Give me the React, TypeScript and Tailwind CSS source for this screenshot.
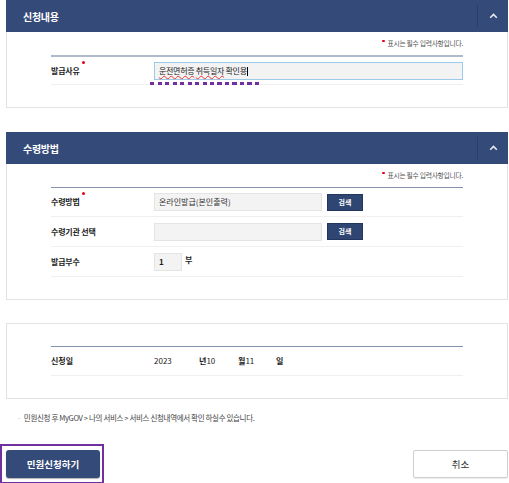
import React from "react";

const Dot = () => (
  <span className="absolute right-[-5px] top-[-4px] w-[3px] h-[3px] rounded-full bg-[#e60012]" />
);

const Header = ({ title }: { title: string }) => (
  <div className="flex h-[32px] bg-[#344a78] items-stretch">
    <div className="flex-1 flex items-center pl-[17px] text-white font-bold text-[10px] tracking-[-0.3px]">
      {title}
    </div>
    <div className="flex items-center">
      <div className="w-px h-[22px] bg-[#2b3e66]" />
      <div className="w-[30px] flex items-center justify-center">
        <svg width="9" height="6" viewBox="0 0 9 6">
          <polyline points="1.2,4.8 4.5,1.5 7.8,4.8" fill="none" stroke="#e6eaf2" strokeWidth="1.6" />
        </svg>
      </div>
    </div>
  </div>
);

const Note = () => (
  <div className="h-[10px] flex items-center justify-end pr-[44px] text-[6.8px] text-[#555] tracking-[-0.3px]">
    <span className="w-[2.5px] h-[2.5px] rounded-full bg-[#e60012] mr-[3px] -mt-[4px]" />
    표시는 필수 입력사항입니다.
  </div>
);

const SearchBtn = () => (
  <div className="w-[36px] h-[17px] bg-[#2f4572] border border-[#22365e] text-white text-[7px] font-bold flex items-center justify-center">
    검색
  </div>
);

export default function App() {
  return (
    <div className="w-[509px] h-[483px] bg-white relative overflow-hidden font-['Noto_Sans_CJK_KR','Noto_Sans',sans-serif] text-[#222]">
      {/* Section 1 */}
      <div className="ml-[6px] w-[502px]">
        <Header title="신청내용" />
        <div className="border border-t-0 border-[#e2e2e2] pt-[6px] pb-[22px]">
          <Note />
          <div className="ml-[44px] w-[412px] mt-[7px] border-t-2 border-[#b1bacb]">
            <div className="h-[28px] flex items-center border-b border-[#f0f0f0] relative">
              <div className="w-[103px] text-[8px] font-bold tracking-[-0.2px]">
                <span className="relative">
                  발급사유
                  <Dot />
                </span>
              </div>
              <div className="flex-1 h-[18px] bg-[#f3f3f3] border border-[#9ccbea] flex items-center pl-[4px] text-[8px] text-[#222] tracking-[-0.3px] mt-[1px]">
                <span className="underline decoration-wavy decoration-[#e53935] decoration-1 underline-offset-[1px]">운전면허증</span>
                <span>&nbsp;</span>
                <span className="underline decoration-wavy decoration-[#e53935] decoration-1 underline-offset-[1px]">취득일자</span>
                <span>&nbsp;확인용</span>
                <span className="inline-block w-px h-[9px] bg-black" />
              </div>
              <div className="absolute left-[99px] top-[25px] w-[112px] h-[3px] bg-[repeating-linear-gradient(90deg,#7030a0_0_4px,transparent_4px_7.5px)]" />
            </div>
          </div>
        </div>
      </div>

      {/* Section 2 */}
      <div className="ml-[6px] w-[502px] mt-[24px]">
        <Header title="수령방법" />
        <div className="border border-t-0 border-[#e2e2e2] pt-[6px] pb-[22px]">
          <Note />
          <div className="ml-[44px] w-[412px] mt-[7px] border-t border-[#8391ae]">
            <div className="h-[29px] flex items-center border-b border-[#f0f0f0]">
              <div className="w-[103px] text-[8px] font-bold tracking-[-0.2px]">
                <span className="relative">
                  수령방법
                  <Dot />
                </span>
              </div>
              <div className="w-[168px] h-[18px] bg-[#f3f3f3] border border-[#e4e4e4] flex items-center pl-[4px] text-[8px] text-[#333]">
                온라인발급(본인출력)
              </div>
              <div className="ml-[5px]">
                <SearchBtn />
              </div>
            </div>
            <div className="h-[30px] flex items-center border-b border-[#f0f0f0]">
              <div className="w-[103px] text-[8px] font-bold tracking-[-0.2px]">수령기관 선택</div>
              <div className="w-[168px] h-[18px] bg-[#f3f3f3] border border-[#e4e4e4]" />
              <div className="ml-[5px]">
                <SearchBtn />
              </div>
            </div>
            <div className="h-[30px] flex items-center border-b border-[#f0f0f0]">
              <div className="w-[103px] text-[8px] font-bold tracking-[-0.2px]">발급부수</div>
              <div className="w-[28px] h-[18px] bg-[#f3f3f3] border border-[#e4e4e4] flex items-center pl-[4px] text-[8px] font-bold">
                1
              </div>
              <div className="ml-[3px] text-[8px] font-bold -mt-[3px]">부</div>
            </div>
          </div>
        </div>
      </div>

      {/* Section 3 */}
      <div className="ml-[6px] w-[502px] mt-[23px] border border-[#e2e2e2] pt-[22px] pb-[22px]">
        <div className="ml-[44px] w-[412px] border-t border-[#8391ae]">
          <div className="h-[29px] flex items-center border-b border-[#f0f0f0] text-[8px]">
            <div className="w-[103px] font-bold">신청일</div>
            <div className="w-[45px]">2023</div>
            <div className="w-[39px]">
              <span className="font-bold">년</span>10
            </div>
            <div className="w-[38px]">
              <span className="font-bold">월</span>11
            </div>
            <div className="font-bold">일</div>
          </div>
        </div>
      </div>

      {/* Note */}
      <div className="mt-[14px] h-[10px] flex items-center pl-[17px] text-[7.5px] text-[#444] tracking-[-0.35px]">
        <span className="text-[#aaa] mr-[3px]">·</span>
        민원신청 후 MyGOV &gt; 나의 서비스 &gt; 서비스 신청내역에서 확인 하실수 있습니다.
      </div>

      {/* Buttons */}
      <div className="mt-[21px] flex items-center justify-between">
        <div className="border-2 border-[#7030a0] pl-[4px] pr-[2px] py-[4px]">
          <div className="w-[94px] h-[28px] bg-[#344a78] rounded-[3px] flex items-center justify-center text-white font-bold text-[9.5px] shadow-[0_1px_1px_rgba(0,0,0,0.3)]">
            민원신청하기
          </div>
        </div>
        <div className="mr-[1px] w-[95px] h-[28px] bg-white border border-[#cfcfcf] rounded-[2px] flex items-center justify-center text-[9.5px] text-[#333] shadow-[0_1px_1px_rgba(0,0,0,0.08)]">
          취소
        </div>
      </div>
    </div>
  );
}
